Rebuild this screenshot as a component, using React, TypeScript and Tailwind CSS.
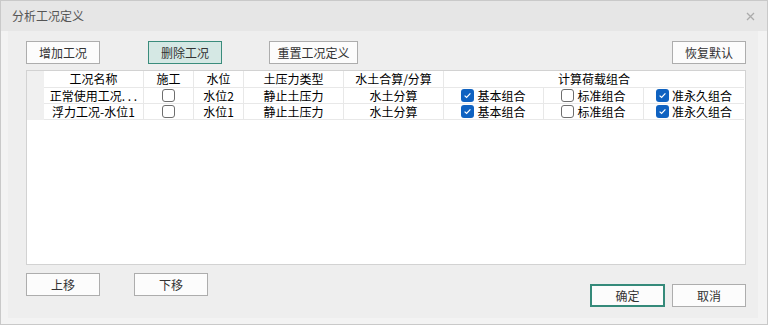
import React from "react";

const font = { fontFamily: '"Noto Sans CJK SC", "Noto Sans", sans-serif' };

type Row = {
  name: string;
  build: boolean;
  water: string;
  soil: string;
  mode: string;
  basic: boolean;
  standard: boolean;
  quasi: boolean;
};

const rows: Row[] = [
  { name: "正常使用工况. . .", build: false, water: "水位2", soil: "静止土压力", mode: "水土分算", basic: true, standard: false, quasi: true },
  { name: "浮力工况-水位1", build: false, water: "水位1", soil: "静止土压力", mode: "水土分算", basic: true, standard: false, quasi: true },
];

function Check({ on }: { on: boolean }) {
  if (on) {
    return (
      <span className="flex h-[13px] w-[13px] shrink-0 items-center justify-center rounded-[3px] bg-[#0f62c1]">
        <svg width="9" height="9" viewBox="0 0 9 9">
          <path d="M1.6 4.6 L3.6 6.5 L7.4 2.4" fill="none" stroke="#fff" strokeWidth="1.2" />
        </svg>
      </span>
    );
  }
  return <span className="h-[13px] w-[13px] shrink-0 rounded-[3px] border border-[#6e6e6e] bg-white" />;
}

function Btn({ label, kind }: { label: string; kind?: "active" | "primary" }) {
  const cls =
    kind === "active"
      ? "border border-[#3a8c7c] bg-[#d5e8e4]"
      : kind === "primary"
      ? "border-2 border-[#358a7a] bg-[#fcfcfc]"
      : "border border-[#adadad] bg-[#fcfcfc]";
  return (
    <button className={`flex h-[23px] w-full items-center justify-center text-[12px] text-[#333] ${cls}`}>
      {label}
    </button>
  );
}

const cell = "flex items-center justify-center border-r border-b border-[#e8e8e8] whitespace-nowrap overflow-hidden";

export default function App() {
  return (
    <div style={font} className="flex h-[325px] w-[768px] flex-col border border-[#c9c9c9] bg-[#f3f3f3] text-black">
      <div className="flex h-[30px] shrink-0 items-center justify-between bg-[#e6e6e6] pl-[11px] pr-[12px]">
        <span className="text-[12px] text-[#555]">分析工况定义</span>
        <svg width="9" height="9" viewBox="0 0 9 9">
          <path d="M1 1 L8 8 M8 1 L1 8" stroke="#ababab" strokeWidth="1.3" />
        </svg>
      </div>
      <div className="flex flex-1 pb-[6px] pl-[7px] pr-[9px]">
        <div className="flex flex-1 flex-col bg-[#eeeeee] pl-[18px] pr-[12px] pt-[10px]">
          <div className="flex items-center">
            <div className="w-[74px]"><Btn label="增加工况" /></div>
            <div className="ml-[48px] w-[74px]"><Btn label="删除工况" kind="active" /></div>
            <div className="ml-[47px] w-[89px]"><Btn label="重置工况定义" /></div>
            <div className="ml-auto w-[74px]"><Btn label="恢复默认" /></div>
          </div>

          <div className="mt-[6px] h-[195px] border border-[#d2d2d2] bg-white text-[12px]">
            <div className="grid grid-cols-[17px_100px_50px_50px_100px_100px_100px_100px_100px] grid-rows-[17px_16px_16px]">
              <div className="row-span-3 bg-[#f0f0f0]" />
              <div className={cell}>工况名称</div>
              <div className={cell}>施工</div>
              <div className={cell}>水位</div>
              <div className={cell}>土压力类型</div>
              <div className={cell}>水土合算/分算</div>
              <div className={`${cell} col-span-3 border-r-0`}>计算荷载组合</div>
              {rows.map((r, i) => (
                <React.Fragment key={i}>
                  <div className={cell}>{r.name}</div>
                  <div className={cell}><Check on={r.build} /></div>
                  <div className={cell}>{r.water}</div>
                  <div className={cell}>{r.soil}</div>
                  <div className={cell}>{r.mode}</div>
                  <div className={`${cell} gap-[3px]`}><Check on={r.basic} />基本组合</div>
                  <div className={`${cell} gap-[3px]`}><Check on={r.standard} />标准组合</div>
                  <div className={`${cell} gap-[3px] border-r-0`}><Check on={r.quasi} />准永久组合</div>
                </React.Fragment>
              ))}
            </div>
          </div>

          <div className="mt-[8px] flex h-[34px]">
            <div className="flex items-start">
              <div className="w-[74px]"><Btn label="上移" /></div>
              <div className="ml-[34px] w-[74px]"><Btn label="下移" /></div>
            </div>
            <div className="ml-auto flex items-end">
              <div className="w-[75px]"><Btn label="确定" kind="primary" /></div>
              <div className="ml-[7px] w-[74px]"><Btn label="取消" /></div>
            </div>
          </div>
        </div>
      </div>
    </div>
  );
}
